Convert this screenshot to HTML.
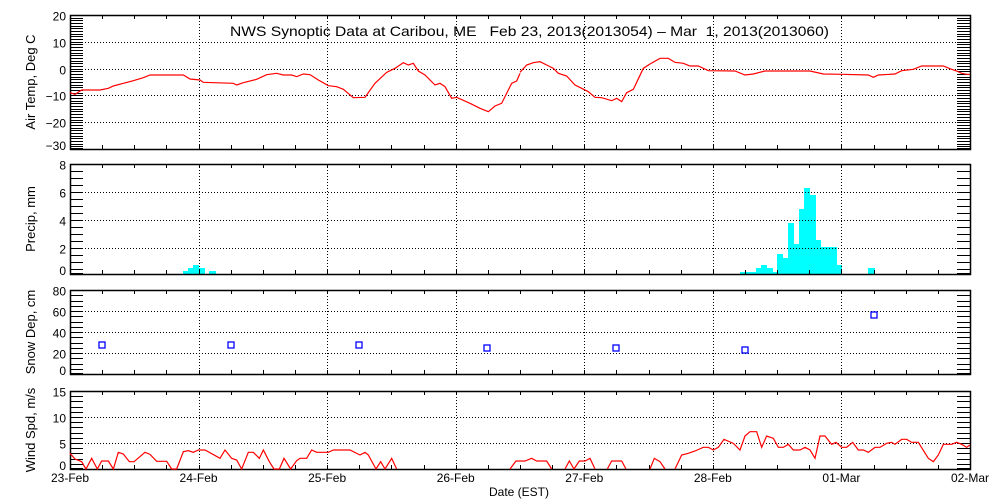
<!DOCTYPE html>
<html><head><meta charset="utf-8"><style>
html,body{margin:0;padding:0;background:#fff;}
svg{display:block;}
text{font-family:"Liberation Sans",sans-serif;fill:#000;}
.pre{white-space:pre;}
</style></head><body>
<svg id="s" width="1000" height="500" viewBox="0 0 1000 500" xmlns="http://www.w3.org/2000/svg">
<g id="g"></g>
<g transform="translate(70,40) scale(0.33333)"><polyline fill="none" stroke="#f00" stroke-width="1.2" vector-effect="non-scaling-stroke" points="0,158 15,163 35,150 90,150 115,145 130,138 160,130 190,122 220,113 240,105 340,105 360,117 390,120 400,127 490,130 500,135 520,128 560,118 590,104 620,100 640,105 665,105 680,110 700,102 720,104 745,120 775,137 800,140 820,148 850,173 885,172 915,130 950,97 975,85 1000,68 1015,75 1030,70 1045,93 1065,105 1095,135 1110,130 1125,140 1145,175 1160,172 1200,190 1230,205 1255,215 1275,198 1295,190 1315,150 1325,130 1340,123 1350,100"/></g>
<g transform="translate(520,40) scale(0.33333)"><polyline fill="none" stroke="#f00" stroke-width="1.2" vector-effect="non-scaling-stroke" points="0,97 20,75 40,68 60,65 80,75 100,85 115,100 140,108 165,135 185,145 205,155 225,172 245,173 275,182 290,175 305,185 320,158 340,148 370,85 390,72 420,55 445,55 465,67 490,70 510,78 535,78 565,92 645,93 675,105 700,102 735,93 870,93 910,102 965,103 1045,105 1060,112 1075,105 1125,102 1145,92 1180,88 1205,78 1270,78 1290,86 1310,93 1325,100 1340,103 1350,103"/></g>
<g transform="translate(70,420) scale(0.33333)" fill="none" stroke="#f00" stroke-width="1.2">
<polyline vector-effect="non-scaling-stroke" points="0,100 15,117 35,125 48,147 65,115 82,147 95,123 115,123 130,147 145,97 160,102 178,125 192,125 225,97 240,103 260,124 290,124 305,147 320,147 340,95 355,92 370,97 385,90 405,90 450,115 465,90 485,115 500,120 515,147 535,97 550,97 568,115 580,90 598,125 612,147 628,147 642,115 662,147 680,122 690,115 710,115 725,90 740,97 775,97 790,90 840,90 870,105 885,97 895,105 918,147 932,125 945,147 965,115 980,147"/>
<polyline vector-effect="non-scaling-stroke" points="1320,147 1338,123 1350,123"/></g>
<g transform="translate(520,420) scale(0.33333)" fill="none" stroke="#f00" stroke-width="1.2">
<polyline vector-effect="non-scaling-stroke" points="0,123 15,123 35,115 50,123 80,123 95,147"/>
<polyline vector-effect="non-scaling-stroke" points="135,147 148,123 162,147 178,123 195,123 210,115 225,147"/>
<polyline vector-effect="non-scaling-stroke" points="262,147 275,123 305,123 318,147"/>
<polyline vector-effect="non-scaling-stroke" points="390,147 403,115 420,125 435,147"/>
<polyline vector-effect="non-scaling-stroke" points="465,147 485,105 505,100 525,93 550,82 565,82 580,90 595,82 612,58 640,70 660,90 675,48 690,35 710,35 725,82 740,48 760,55 775,82 790,82 805,73 820,90 840,90 855,82 870,90 885,115 900,48 915,48 935,73 948,67 965,82 980,82 998,67 1015,90 1030,90 1045,97 1065,82 1080,82 1100,70 1115,67 1125,73 1145,58 1160,58 1175,67 1195,67 1225,115 1240,125 1255,105 1270,73 1295,73 1310,67 1325,73 1340,82 1350,75"/></g>
<text class="pre" x="230" y="36" font-size="14" textLength="599" lengthAdjust="spacingAndGlyphs">NWS Synoptic Data at Caribou, ME   Feb 23, 2013(2013054) – Mar  1, 2013(2013060)</text>
<text x="519" y="496" font-size="12" text-anchor="middle">Date (EST)</text>
<text transform="translate(35,82) rotate(-90)" font-size="13" text-anchor="middle">Air Temp, Deg C</text>
<text transform="translate(35,219) rotate(-90)" font-size="13" text-anchor="middle">Precip, mm</text>
<text transform="translate(35,332) rotate(-90)" font-size="13" text-anchor="middle">Snow Dep, cm</text>
<text transform="translate(35,430) rotate(-90)" font-size="13" text-anchor="middle">Wind Spd, m/s</text>
</svg>
<script>
var g=document.getElementById('g'),h='';
function L(x1,y1,x2,y2,extra){h+='<line x1="'+x1+'" y1="'+y1+'" x2="'+x2+'" y2="'+y2+'" stroke="#000" '+(extra||'')+'/>';}
function T(x,y,s,a){h+='<text x="'+x+'" y="'+y+'" font-size="12" text-anchor="'+(a||'end')+'">'+s+'</text>';}
var X0=70,X1=970,D=900/7;
var P=[{t:15,b:149,v0:-30,v1:20,minor:1,major:10},{t:164,b:276,v0:0,v1:8,minor:0.5,major:2,bb:274},{t:290,b:374,v0:0,v1:80,minor:5,major:20},{t:391,b:469,v0:0,v1:15,minor:1,major:5}];
var dot='stroke-dasharray="1 2" stroke-width="1"';
var bars=[[183,188,271],[188,193,268],[193,199,265],[199,205,268],[209,216,271],[740,756,272],[756,761,268],[761,767,265],[767,773,268],[773,777,272],[777,783,254],[783,788,258],[788,794,223],[794,799,244],[799,804,209],[804,810,188],[810,816,195],[816,821,240],[821,837,247],[837,842,265],[868,875,268]];
bars.forEach(function(b){h+='<rect x="'+b[0]+'" y="'+b[2]+'" width="'+(b[1]-b[0])+'" height="'+(274-b[2])+'" fill="#0ff"/>';});
P.forEach(function(p){
 var bot=p.bb||p.b;
 function Y(v){return p.b-(v-p.v0)*(p.b-p.t)/(p.v1-p.v0);}
 for(var v=p.v0;v<=p.v1+1e-6;v+=p.minor){var y=Math.round(Y(v))+0.5;if(y>bot)y=bot-0.5;
  L(X0,y,X0+13,y);L(X1-13,y,X1,y);
  if(Math.abs(v/p.major-Math.round(v/p.major))<1e-6){
   if(v>p.v0&&v<p.v1)L(X0,y,X1,y,dot);
   T(66,Math.min(y+5,bot+1),(v<0?'\u2212'+(-v):v));
  }}
 for(var d=1;d<7;d++){var x=Math.round(X0+d*D)+0.5;L(x,p.t,x,bot,dot);}
 for(var k=1;k<28;k++){var x=Math.round(X0+k*D/4)+0.5;L(x,p.t,x,p.t+4);L(x,bot-4,x,bot);}
 h+='<rect x="70.5" y="'+(p.t+0.5)+'" width="900" height="'+(bot-p.t)+'" fill="none" stroke="#000" stroke-width="1.5"/>';
});
[[102,345],[231,345],[359,345],[487,348],[616,348],[745,350],[874,315]].forEach(function(s){h+='<rect x="'+(s[0]-3)+'" y="'+(s[1]-3)+'" width="6" height="6" fill="none" stroke="#00f" stroke-width="1.3"/>';});
var lab=['23-Feb','24-Feb','25-Feb','26-Feb','27-Feb','28-Feb','01-Mar','02-Mar'];
lab.forEach(function(s,i){T(X0+i*D,482,s,'middle');});
g.innerHTML=h;
</script>
</body></html>
